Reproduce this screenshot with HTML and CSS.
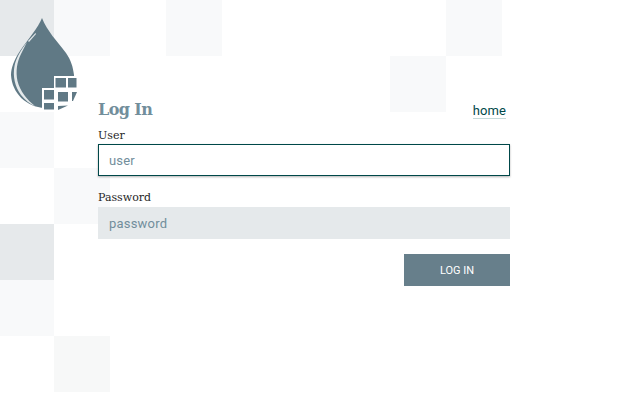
FILE: index.html
```html
<!DOCTYPE html>
<html lang="en">
<head>
<meta charset="utf-8">
<title>Log In</title>
<link rel="stylesheet" href="styles.css">
</head>
<body>
<div class="tiles" aria-hidden="true">
  <div class="tile c0 r0 dark"></div>
  <div class="tile c1 r0"></div>
  <div class="tile c3 r0"></div>
  <div class="tile c8 r0"></div>
  <div class="tile c7 r1"></div>
  <div class="tile c0 r2"></div>
  <div class="tile c1 r3"></div>
  <div class="tile c0 r4 dark"></div>
  <div class="tile c0 r5"></div>
  <div class="tile c1 r6 green"></div>
</div>
<svg class="logo" viewBox="0 0 80 112" width="80" height="112" aria-label="Logo">
  <path class="drop" d="M42 18C38 28 28 39 20 51C14 60 11 68 11 75C12 93 26 107 45 108C64 108 75 92 74 75C73 67 71 60 66 53C57 41 47 31 42 18Z"/>
  <path class="shine" d="M27 42C21 50 16 58 14.500 66C12.500 76 15 87 21 95C25 100 30 104 35 106C27 100 20 91 17.500 81C15.500 71 17 62 21 54C23 50 25 46 27 42Z"/>
  <path class="shine" d="M35.500 33L28 41L29 42L36 34Z"/>
  <g class="grid">
    <rect x="54" y="76" width="23" height="36"/>
    <rect x="42" y="88" width="13" height="24"/>
  </g>
  <g class="cells">
    <rect x="55.500" y="78" width="10.500" height="9.500"/>
    <rect x="68" y="78" width="8.500" height="9.500"/>
    <rect x="44" y="90" width="10" height="9.500"/>
    <rect x="58" y="92" width="10" height="9.500"/>
    <path d="M72 92H77L73 101H72Z"/>
    <rect x="44" y="103" width="10" height="6.500"/>
    <path d="M58 106L68 105.500L58 110Z"/>
  </g>
</svg>
<main class="page">
  <div class="panel">
    <div class="head">
      <h1 class="title">Log In</h1>
      <a class="home" href="#">home</a>
    </div>
    <form class="form">
      <div class="field">
        <label class="label" for="user">User</label>
        <input class="input focus" id="user" type="text" placeholder="user">
      </div>
      <div class="field">
        <label class="label" for="password">Password</label>
        <input class="input" id="password" type="password" placeholder="password">
      </div>
      <div class="actions">
        <button class="button" type="button">LOG IN</button>
      </div>
    </form>
  </div>
</main>
</body>
</html>
```

FILE: styles.css
```css
* { box-sizing: border-box; }
html, body { margin: 0; height: 100%; background: #fff; }
body { position: relative; overflow: hidden; font-family: "Roboto", sans-serif; }

.tiles { position: absolute; inset: 0; }
.tile { position: absolute; width: 56px; height: 56px; background: #f8f9fa; }
.dark { background: #e6e9eb; }
.green { background: #f7f8f8; }
.c0 { left: -2px; }
.c1 { left: 54px; }
.c3 { left: 166px; }
.c7 { left: 390px; }
.c8 { left: 446px; }
.r0 { top: 0; }
.r1 { top: 56px; }
.r2 { top: 112px; }
.r3 { top: 168px; }
.r4 { top: 224px; }
.r5 { top: 280px; }
.r6 { top: 336px; }

.logo { position: absolute; left: 0; top: 0; }
.drop { fill: #607985; }
.shine { fill: #e4e9eb; }
.grid { fill: #fff; }
.cells { fill: #607985; }

.page { position: relative; padding: 98px 0 0 98px; }
.panel { width: 412px; }
.head { display: flex; justify-content: space-between; align-items: flex-start; height: 24px; padding-right: 4px; }
.title { margin: 0; font: 700 16px/24px "DejaVu Serif", serif; letter-spacing: -0.6px; color: #728e9b; }
.home { margin-top: 5px; font-size: 13px; line-height: 15px; letter-spacing: 0.1px; color: #004849; text-decoration: none; border-bottom: 1px solid #c5dad9; }
.form { display: flex; flex-direction: column; }
.field { display: flex; flex-direction: column; }
.field + .field { margin-top: 13px; }
.label { font: 11px/17px "DejaVu Serif", serif; color: #262626; height: 17px; margin-top: 5px; }
.field + .field .label { margin-top: 0; height: 18px; line-height: 18px; }
.input { height: 32px; width: 100%; padding: 0 11px; border: 0; border-radius: 0; outline: 0; background: #e5e9eb; font: 13px "Roboto", sans-serif; letter-spacing: 0.2px; color: #728e9b; }
.input::placeholder { color: #728e9b; opacity: 1; }
.focus { background: #fff; border: 1px solid #004849; padding: 0 10px; box-shadow: 0 1px 2px rgba(0,0,0,.3); }
.actions { display: flex; justify-content: flex-end; margin-top: 15px; }
.button { width: 106px; height: 32px; border: 0; border-radius: 0; background: #677f8b; color: #fff; font: 400 11px "Roboto", sans-serif; }
```
